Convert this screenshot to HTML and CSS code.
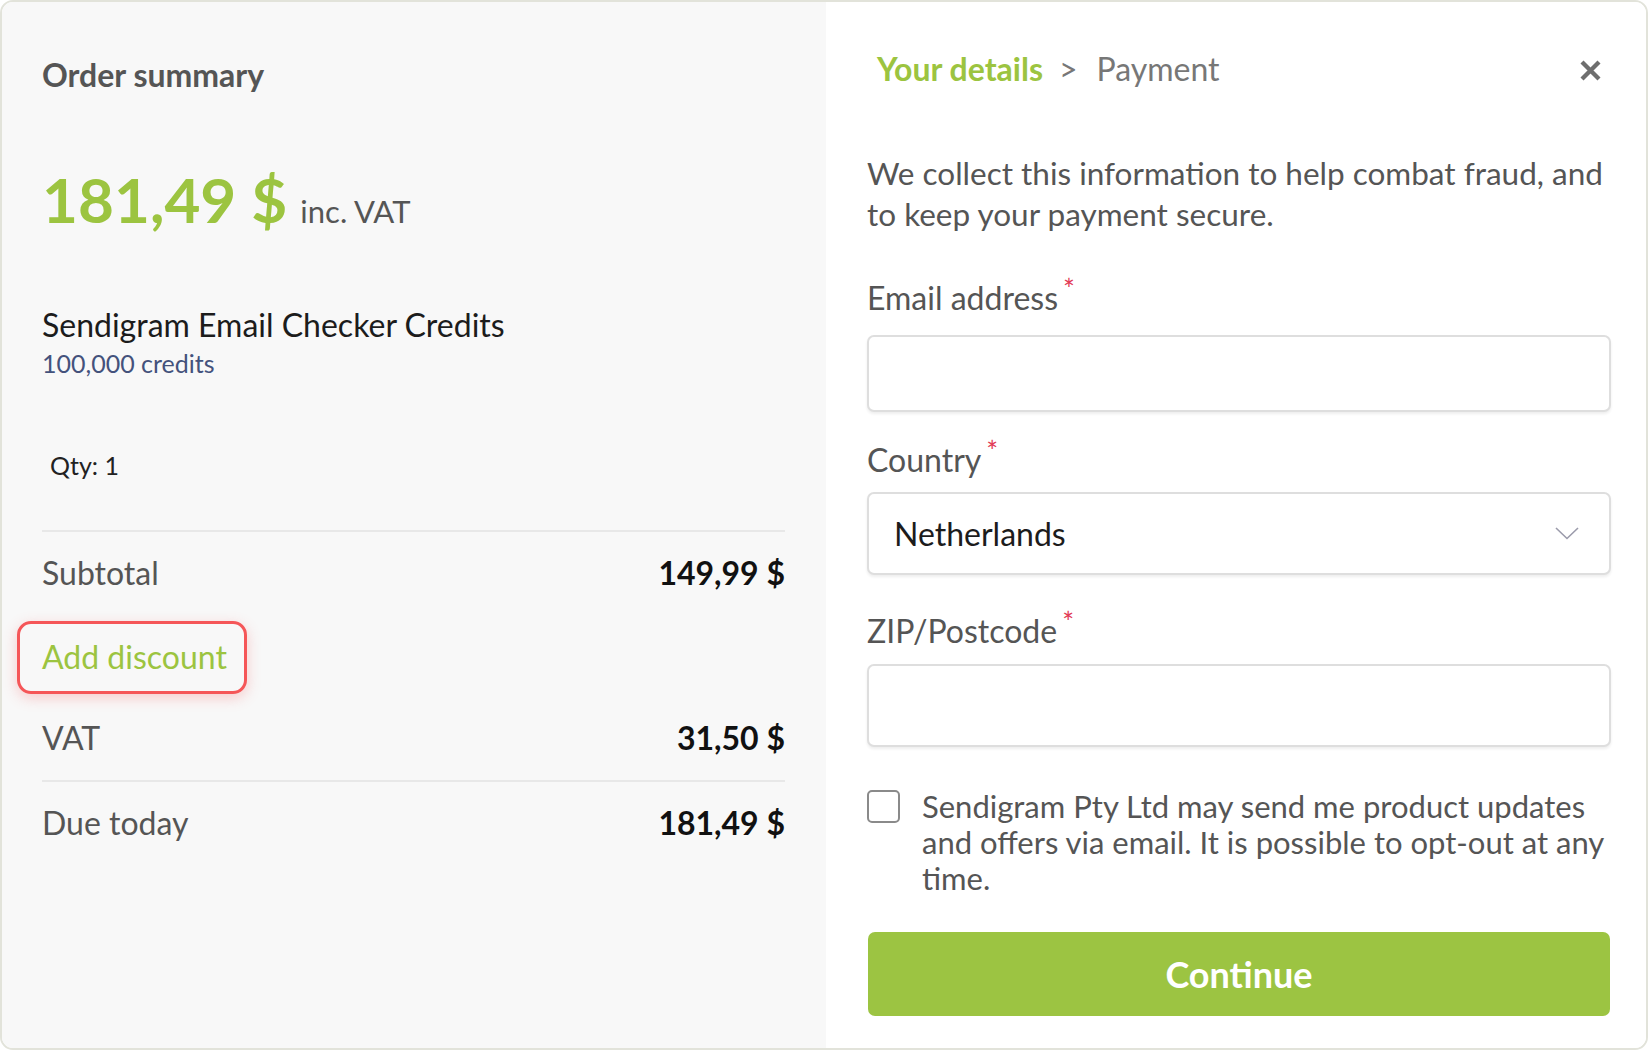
FILE: index.html
```html
<!DOCTYPE html>
<html lang="en">
<head>
<meta charset="utf-8">
<title>Checkout</title>
<link rel="stylesheet" href="styles.css">
</head>
<body>
<div class="card">
  <section class="summary">
    <h2 class="summary-title">Order summary</h2>
    <div class="price-row">
      <span class="price">181,49 $</span>
      <span class="price-note">inc. VAT</span>
    </div>
    <div class="product-name">Sendigram Email Checker Credits</div>
    <div class="product-sub">100,000 credits</div>
    <div class="qty">Qty: 1</div>
    <hr class="divider divider-top">
    <div class="line line-subtotal">
      <span class="line-label">Subtotal</span>
      <span class="line-value">149,99 $</span>
    </div>
    <div class="discount-wrap">
      <a class="discount" href="#">Add discount</a>
    </div>
    <div class="line line-vat">
      <span class="line-label">VAT</span>
      <span class="line-value">31,50 $</span>
    </div>
    <hr class="divider divider-vat">
    <div class="line line-due">
      <span class="line-label">Due today</span>
      <span class="line-value">181,49 $</span>
    </div>
  </section>
  <section class="details">
    <div class="topbar">
      <nav class="crumbs">
        <span class="crumb-active">Your details</span>
        <span class="crumb-sep">&gt;</span>
        <span class="crumb">Payment</span>
      </nav>
      <svg class="close" width="23" height="23" viewBox="0 0 23 23" aria-label="Close">
        <path d="M3 3 L20 20 M20 3 L3 20" stroke="#6e6e6e" stroke-width="4.3" fill="none"/>
      </svg>
    </div>
    <p class="intro">We collect this information to help combat fraud, and to keep your payment secure.</p>
    <label class="field-label label-email">Email address<span class="req">*</span></label>
    <div class="input input-email"></div>
    <label class="field-label label-country">Country<span class="req">*</span></label>
    <div class="input select">
      <span class="select-value">Netherlands</span>
      <svg class="chevron" width="24" height="13" viewBox="0 0 24 13">
        <path d="M1 1 L12 11.5 L23 1" stroke="#9b9bab" stroke-width="1.6" fill="none"/>
      </svg>
    </div>
    <label class="field-label label-zip">ZIP/Postcode<span class="req">*</span></label>
    <div class="input input-zip"></div>
    <div class="consent">
      <span class="checkbox"></span>
      <span class="consent-text">Sendigram Pty Ltd may send me product updates and offers via email. It is possible to opt-out at any time.</span>
    </div>
    <button class="continue">Continue</button>
  </section>
</div>
</body>
</html>
```

FILE: styles.css
```css
* { box-sizing: border-box; }
html, body { margin: 0; padding: 0; background: #ffffff; }
body { font-family: Lato, "Open Sans", "Liberation Sans", sans-serif; }

.card {
  width: 1648px;
  height: 1050px;
  border: 2px solid #e2e3da;
  border-radius: 13px;
  overflow: hidden;
  display: flex;
}

/* ---------- left column ---------- */
.summary {
  width: 824px;
  flex: none;
  background: #f8f8f8;
  padding: 54px 41px 0 40px;
  display: flex;
  flex-direction: column;
}
.summary-title {
  margin: 0;
  font-size: 32px;
  line-height: 38px;
  font-weight: 700;
  color: #555555;
}
.price-row {
  margin-top: 74px;
  display: flex;
  align-items: baseline;
  gap: 13px;
}
.price {
  font-size: 62px;
  line-height: 62px;
  font-weight: 700;
  color: #9cc440;
}
.price-note {
  font-size: 31px;
  color: #555555;
}
.product-name {
  margin-top: 76px;
  font-size: 32px;
  line-height: 38px;
  color: #1c1c1c;
}
.product-sub {
  margin-top: 4px;
  font-size: 25px;
  line-height: 30px;
  color: #44527c;
}
.qty {
  margin-top: 72px;
  padding-left: 8px;
  font-size: 25px;
  line-height: 30px;
  color: #222222;
}
.divider {
  border: 0;
  height: 2px;
  background: #e8e8e8;
  margin: 0;
}
.divider-top { margin-top: 50px; }
.line {
  display: flex;
  justify-content: space-between;
  align-items: baseline;
  font-size: 32px;
  line-height: 38px;
}
.line-label { color: #555555; }
.line-value { color: #111111; font-weight: 700; }
.line-subtotal { margin-top: 22px; }
.discount-wrap { margin-top: 29px; display: flex; }
.discount {
  margin-left: -25px;
  width: 230px;
  height: 73px;
  display: flex;
  align-items: center;
  padding: 0 0 2px 22px;
  border: 3px solid #f55658;
  border-radius: 14px;
  box-shadow: 0 4px 14px rgba(245, 86, 88, 0.28);
  font-size: 32px;
  line-height: 38px;
  color: #9cc440;
  text-decoration: none;
}
.line-vat { margin-top: 25px; }
.divider-vat { margin-top: 23px; }
.line-due { margin-top: 22px; }

/* ---------- right column ---------- */
.details {
  flex: 1;
  background: #ffffff;
  padding: 48px 35px 0 41px;
  display: flex;
  flex-direction: column;
}
.topbar {
  display: flex;
  justify-content: space-between;
  align-items: center;
  padding-left: 10px;
}
.crumbs {
  display: flex;
  align-items: baseline;
  gap: 16px;
  font-size: 32px;
  line-height: 38px;
}
.crumb-active { color: #9cc440; font-weight: 700; }
.crumb-sep { color: #777777; margin-right: 3px; }
.crumb { color: #777777; }
.close { margin-right: 9px; margin-top: 3px; }
.intro {
  margin: 65px 0 0 0;
  font-size: 31.5px;
  line-height: 41px;
  color: #555555;
}
.field-label {
  display: block;
  font-size: 32px;
  line-height: 38px;
  color: #555555;
}
.req {
  color: #e23a55;
  font-size: 28px;
  margin-left: 5px;
  vertical-align: 10px;
  line-height: 0;
}
.label-email { margin-top: 44px; }
.label-country { margin-top: 29px; }
.label-zip { margin-top: 37px; }
.input {
  border: 2px solid #dedede;
  border-radius: 7px;
  background: #ffffff;
  box-shadow: 0 2px 3px rgba(0, 0, 0, 0.07);
}
.input-email { margin-top: 18px; height: 77px; }
.select {
  margin-top: 13px;
  height: 83px;
  display: flex;
  align-items: center;
  justify-content: space-between;
  padding: 0 30px 0 25px;
}
.select-value {
  font-size: 32px;
  color: #1c1c1c;
}
.input-zip { margin-top: 14px; height: 83px; }
.consent {
  margin-top: 41px;
  display: flex;
  gap: 22px;
  align-items: flex-start;
}
.checkbox {
  flex: none;
  width: 33px;
  height: 33px;
  margin-top: 2px;
  border: 2px solid #8a8a8a;
  border-radius: 5px;
}
.consent-text {
  font-size: 31px;
  line-height: 36px;
  color: #555555;
}
.continue {
  margin: 36px 1px 0 1px;
  height: 84px;
  border: 0;
  border-radius: 7px;
  background: #9cc442;
  color: #ffffff;
  font-family: Lato, "Open Sans", "Liberation Sans", sans-serif;
  font-size: 36px;
  font-weight: 700;
}
```
